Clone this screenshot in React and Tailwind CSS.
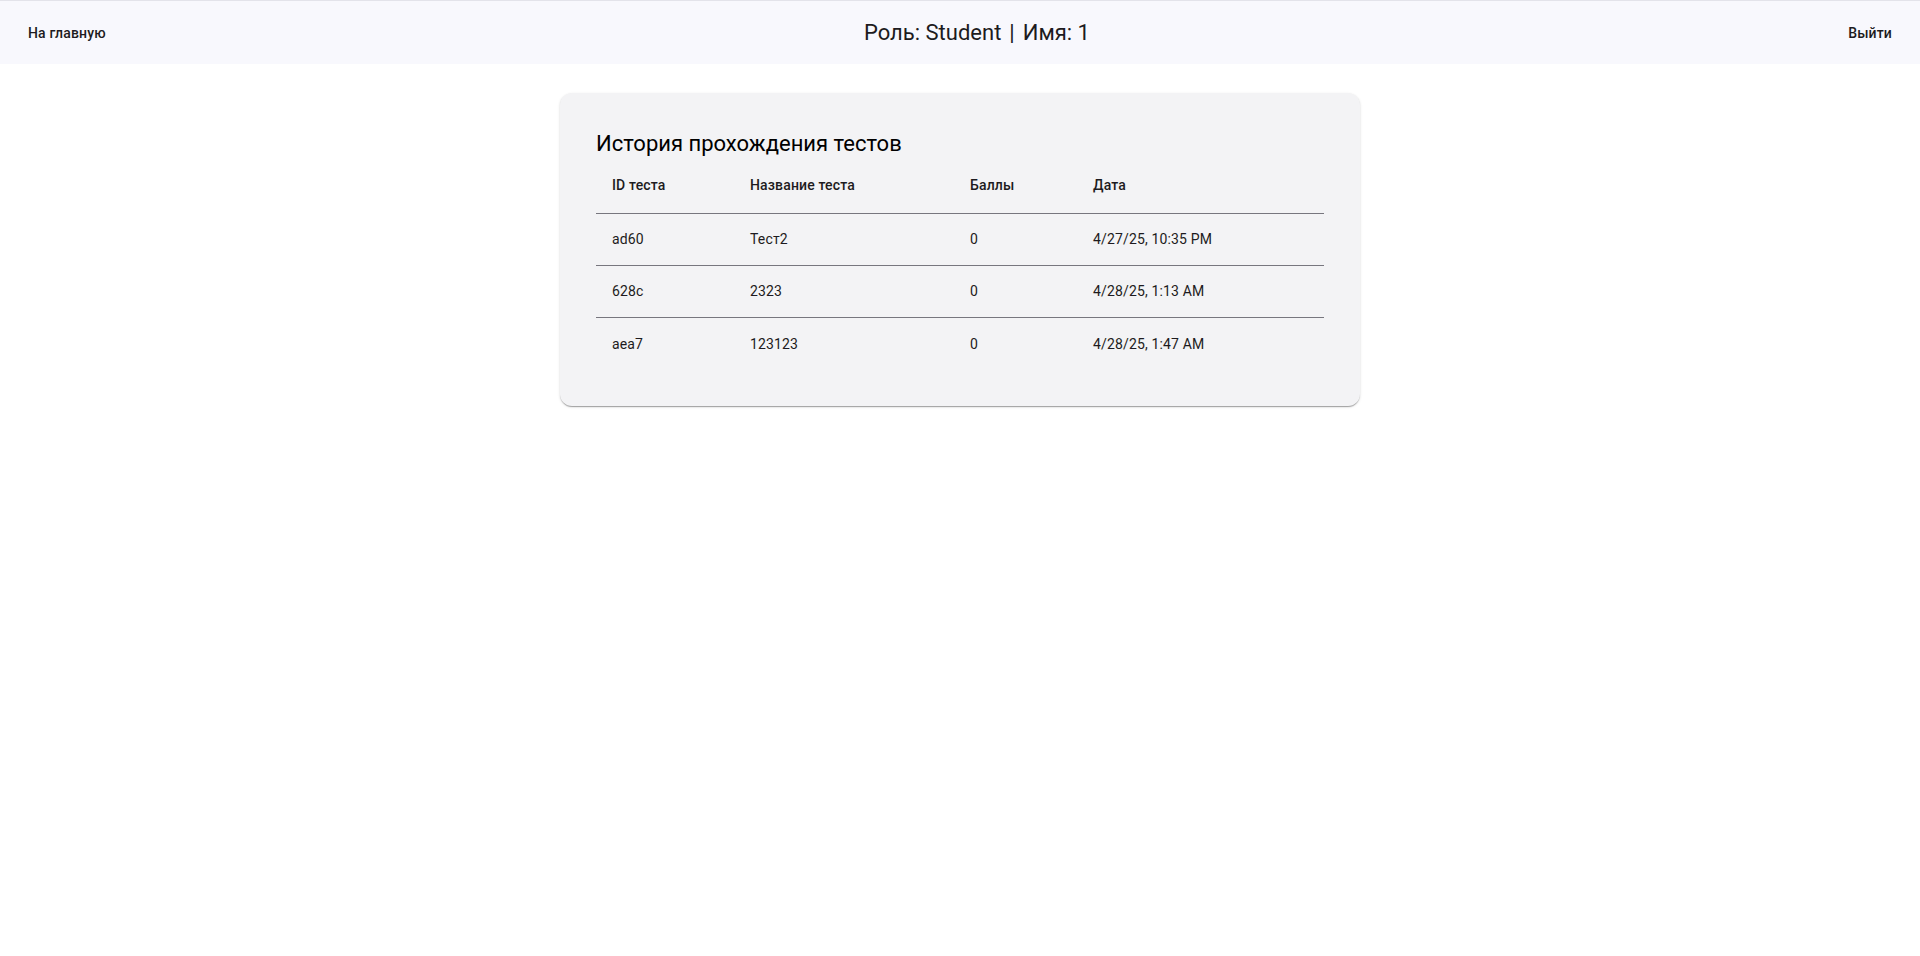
import React from "react";

const rows = [
  { id: "ad60", name: "Тест2", score: "0", date: "4/27/25, 10:35 PM" },
  { id: "628c", name: "2323", score: "0", date: "4/28/25, 1:13 AM" },
  { id: "aea7", name: "123123", score: "0", date: "4/28/25, 1:47 AM" },
];

export default function App() {
  return (
    <div className="min-h-[956px] bg-white font-['Roboto',sans-serif] text-[#1d1b20]">
      <header className="h-[64px] border-t border-[#e3e3ea] bg-[#f8f8fd] px-[28px] flex items-center justify-between">
        <button className="text-[14px] font-medium text-[#1d1b20] leading-[20px] tracking-[0.01em]">На главную</button>
        <div className="flex items-center text-[22px] leading-[28px] text-[#1d1b20]">
          <span>Роль: Student</span>
          <span className="px-[8px]">|</span>
          <span>Имя: 1</span>
        </div>
        <button className="text-[14px] font-medium text-[#1d1b20] leading-[20px] tracking-[0.01em]">Выйти</button>
      </header>
      <main className="pt-[29px] flex justify-center">
        <div className="w-[800px] rounded-[12px] bg-[#f3f3f5] shadow-[0_2px_1px_-1px_rgba(0,0,0,0.2),0_1px_1px_0_rgba(0,0,0,0.14),0_1px_3px_0_rgba(0,0,0,0.12)] px-[36px] pt-[35px] pb-[36px]">
          <h2 className="text-[22px] leading-[32px] font-normal text-black">История прохождения тестов</h2>
          <div className="text-[14px] tracking-[0.01071em]">
            <div className="grid grid-cols-[138px_220px_123px_1fr] h-[54px] pb-[2px] items-center border-b border-[#77767e] font-medium text-[#1d1b20]">
              <div className="px-[16px]">ID теста</div>
              <div className="px-[16px]">Название теста</div>
              <div className="px-[16px]">Баллы</div>
              <div className="px-[16px]">Дата</div>
            </div>
            {rows.map((r, i) => (
              <div
                key={r.id}
                className={
                  i < rows.length - 1
                    ? "grid grid-cols-[138px_220px_123px_1fr] h-[52px] items-center border-b border-[#77767e]"
                    : "grid grid-cols-[138px_220px_123px_1fr] h-[52px] items-center"
                }
              >
                <div className="px-[16px]">{r.id}</div>
                <div className="px-[16px]">{r.name}</div>
                <div className="px-[16px]">{r.score}</div>
                <div className="px-[16px]">{r.date}</div>
              </div>
            ))}
          </div>
        </div>
      </main>
    </div>
  );
}
